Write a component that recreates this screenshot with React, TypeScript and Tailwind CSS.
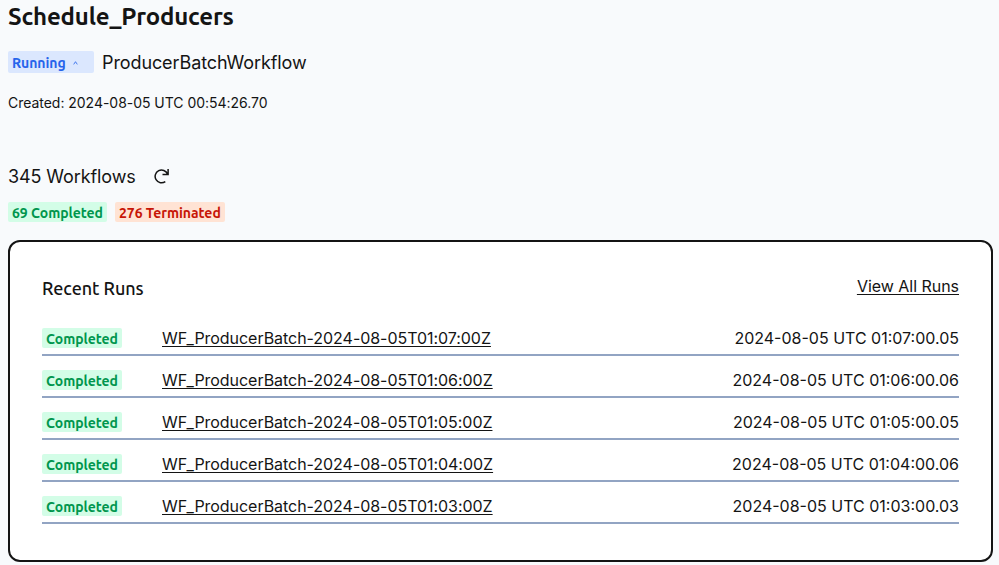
import type { ReactNode } from "react";

const runs = [
  { id: "WF_ProducerBatch-2024-08-05T01:07:00Z", time: "2024-08-05 UTC 01:07:00.05" },
  { id: "WF_ProducerBatch-2024-08-05T01:06:00Z", time: "2024-08-05 UTC 01:06:00.06" },
  { id: "WF_ProducerBatch-2024-08-05T01:05:00Z", time: "2024-08-05 UTC 01:05:00.05" },
  { id: "WF_ProducerBatch-2024-08-05T01:04:00Z", time: "2024-08-05 UTC 01:04:00.06" },
  { id: "WF_ProducerBatch-2024-08-05T01:03:00Z", time: "2024-08-05 UTC 01:03:00.03" },
];

function Badge({ className, children }: { className: string; children: ReactNode }) {
  return (
    <span
      className={`flex h-5 items-center whitespace-nowrap rounded-xs px-1 pt-0.5 font-['Ubuntu','Noto_Sans',sans-serif] text-[14px] leading-5 font-semibold tracking-[-0.04px] ${className}`}
    >
      {children}
    </span>
  );
}

export default function App() {
  return (
    <main className="h-[565px] overflow-hidden bg-[#f8fafc] pr-1.5 pl-2 font-['Inter',sans-serif] text-[#141414]">
      <h1 className="flex h-[34px] items-center font-['Ubuntu','Noto_Sans',sans-serif] text-2xl leading-8 font-semibold tracking-[-0.17px]">
        Schedule_Producers
      </h1>
      <div className="mt-3.5 flex h-7 items-center gap-2">
        <div className="flex h-[22px] w-[86px] items-center rounded-xs bg-[#dbe7fe] pt-0.5 pl-1 font-['Ubuntu','Noto_Sans',sans-serif] text-[14px] font-semibold tracking-[-0.04px] text-[#2664eb]">
          Running
          <svg className="ml-[7px]" width="5" height="4" viewBox="0 0 5 4" fill="none" stroke="currentColor" strokeWidth="0.8">
            <path d="M0.7 3.4 2.5 0.7 4.3 3.4" />
          </svg>
        </div>
        <h2 className="pt-0.5 text-lg leading-7 tracking-[-0.1px]">ProducerBatchWorkflow</h2>
      </div>
      <p className="mt-[17px] text-sm leading-5 tracking-[-0.03px]">Created: 2024-08-05 UTC 00:54:26.70</p>
      <div className="mt-[50px] flex h-7 items-center gap-[17px]">
        <h2 className="text-lg tracking-[-0.1px]">345 Workflows</h2>
        <svg width="16" height="16" viewBox="0 0 16 16" fill="none" stroke="currentColor" strokeWidth="1.5">
          <path d="M15.1 0v5.5H9.5M14.5 5.1A6.4 6.4 0 1 0 12.3 12.6" />
        </svg>
      </div>
      <div className="mt-[11px] flex gap-2">
        <Badge className="w-[99px] bg-[#d3fde7] text-[#00964e]">69 Completed</Badge>
        <Badge className="w-[110px] bg-[#ffe3d4] text-[#c71607]">276 Terminated</Badge>
      </div>
      <section className="mt-[18px] h-[322px] rounded-xl border-2 border-[#141414] bg-white px-8 pt-8">
        <header className="flex h-7 items-start justify-between">
          <h3 className="font-['Ubuntu','Noto_Sans',sans-serif] text-lg leading-7 font-medium tracking-[-0.05px]">Recent Runs</h3>
          <a className="leading-6 tracking-[-0.03px] underline underline-offset-2">View All Runs</a>
        </header>
        <ul className="mt-3">
          {runs.map((run) => (
            <li key={run.id} className="flex h-[42px] items-end border-b-2 border-[#92a4c3] pb-1">
              <div className="flex h-6 w-full items-center">
                <div className="flex w-[120px]">
                  <Badge className="w-20 bg-[#d3fde7] text-[#00964e]">Completed</Badge>
                </div>
                <a className="leading-6 tracking-[-0.04px] underline underline-offset-2">{run.id}</a>
                <time className="ml-auto leading-6">{run.time}</time>
              </div>
            </li>
          ))}
        </ul>
      </section>
    </main>
  );
}
